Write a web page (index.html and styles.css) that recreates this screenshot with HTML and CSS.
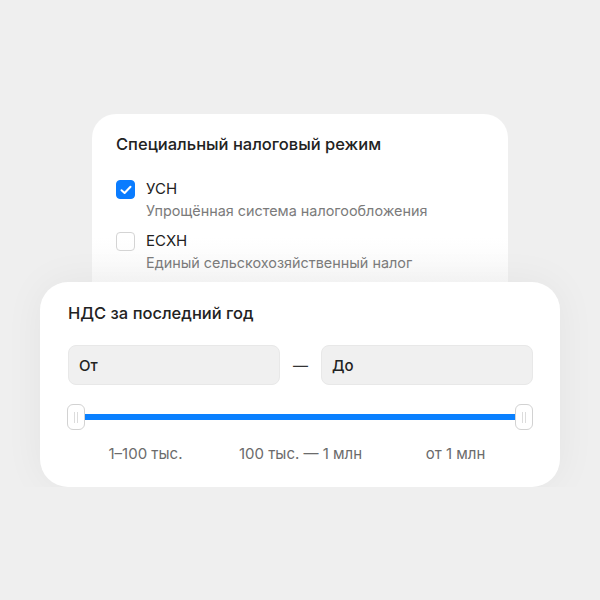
FILE: index.html
```html
<!DOCTYPE html>
<html lang="ru">
<head>
    <meta charset="UTF-8">
    <meta name="viewport" content="width=device-width, initial-scale=1.0">
    <title>Фильтр налогов</title>
    <link rel="stylesheet" href="styles.css">
</head>
<body>

    <div class="stack">
        <div class="card card-back">
            <h2 class="card-title">Специальный налоговый режим</h2>

            <div class="option">
                <span class="checkbox checked">
                    <svg width="12" height="10" viewBox="0 0 12 10">
                        <path d="M1.5 5.2 L4.6 8 L10.5 1.8" fill="none" stroke="#fff" stroke-width="2" stroke-linecap="round" stroke-linejoin="round"/>
                    </svg>
                </span>
                <div class="option-text">
                    <div class="option-name">УСН</div>
                    <div class="option-desc">Упрощённая система налогообложения</div>
                </div>
            </div>

            <div class="option">
                <span class="checkbox"></span>
                <div class="option-text">
                    <div class="option-name">ЕСХН</div>
                    <div class="option-desc">Единый сельскохозяйственный налог</div>
                </div>
            </div>
        </div>

        <div class="card card-front">
            <h2 class="card-title">НДС за последний год</h2>

            <div class="range-inputs">
                <div class="field">От</div>
                <div class="dash">—</div>
                <div class="field">До</div>
            </div>

            <div class="slider">
                <span class="thumb"></span>
                <span class="track"></span>
                <span class="thumb"></span>
            </div>

            <div class="ticks">
                <span>1–100 тыс.</span>
                <span>100 тыс. — 1 млн</span>
                <span>от 1 млн</span>
            </div>
        </div>
    </div>

</body>
</html>
```

FILE: styles.css
```css
body {
    margin: 0;
    background-color: #efefef;
    font-family: Inter, "Noto Sans", Arial, sans-serif;
    color: #222;
}

.stack {
    width: 520px;
    margin: 0 auto;
    padding-top: 114px;
}

.card {
    background-color: #fff;
}
.card-back {
    margin: 0 52px;
    height: 190px;
    padding: 18px 24px 0;
    box-sizing: border-box;
    border-radius: 24px 24px 0 0;
    background: linear-gradient(#fff 65%, #f5f5f5 100%);
}
.card-front {
    margin-top: -22px;
    padding: 19px 27px 23px 28px;
    border-radius: 28px;
    box-shadow: 0 0 40px rgba(0, 0, 0, 0.05);
}

.card-title {
    margin: 0;
    font-size: 16.5px;
    font-weight: 500;
    line-height: 24px;
    color: #222;
}

.option {
    display: flex;
    gap: 11px;
    margin-top: 23px;
}
.option + .option {
    margin-top: 10px;
}
.checkbox {
    width: 19px;
    height: 19px;
    margin-top: 1px;
    box-sizing: border-box;
    border: 1.5px solid #d4d4d4;
    border-radius: 4px;
    display: flex;
    align-items: center;
    justify-content: center;
    flex-shrink: 0;
}
.checkbox.checked {
    background-color: #0a7cff;
    border-color: #0a7cff;
}
.option-name {
    font-size: 15px;
    line-height: 20px;
}
.option-desc {
    margin-top: 2px;
    font-size: 14.4px;
    line-height: 20px;
    color: #7b7b7b;
}

.range-inputs {
    display: flex;
    align-items: center;
    margin-top: 20px;
}
.field {
    flex: 1;
    height: 40px;
    box-sizing: border-box;
    padding-left: 10px;
    display: flex;
    align-items: center;
    background-color: #f0f0f0;
    border: 1px solid #e8e8e8;
    border-radius: 8px;
    font-size: 15px;
    font-weight: 500;
}
.dash {
    width: 41px;
    text-align: center;
    font-size: 15px;
    color: #333;
}

.slider {
    display: flex;
    align-items: center;
    margin-top: 19px;
    margin-left: -1px;
}
.track {
    flex: 1;
    height: 6px;
    background-color: #0a80ff;
}
.thumb {
    position: relative;
    width: 18px;
    height: 26px;
    box-sizing: border-box;
    background-color: #fff;
    border: 1px solid #d2d2d2;
    border-radius: 6px;
}
.thumb::before,
.thumb::after {
    content: "";
    position: absolute;
    top: 7px;
    width: 1px;
    height: 11px;
    background-color: #dcdcdc;
}
.thumb::before {
    left: 6px;
}
.thumb::after {
    left: 9px;
}

.ticks {
    display: grid;
    grid-template-columns: 1fr 1fr 1fr;
    margin-top: 14px;
    font-size: 15px;
    line-height: 20px;
    color: #6b6b6b;
    text-align: center;
}
```
